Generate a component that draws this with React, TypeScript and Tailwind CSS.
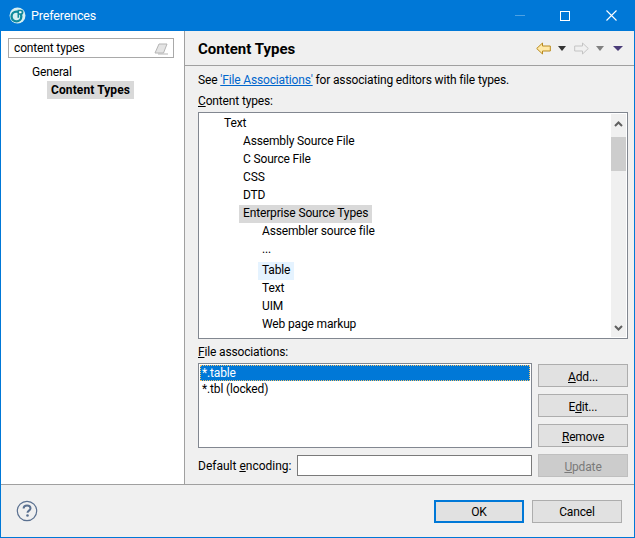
import React from "react";

const Key = ({ children }: { children: React.ReactNode }) => <span className="underline">{children}</span>;

const Row = ({ indent, children, className = "", mt = "" }: { indent: string; children: React.ReactNode; className?: string; mt?: string }) => (
  <div className={`flex h-[18px] items-center ${indent} ${mt}`}>
    <span className={`flex h-[18px] items-center whitespace-nowrap px-[4px] pb-[2px] ${className}`}>{children}</span>
  </div>
);

const Btn = ({ children, disabled = false, className = "" }: { children: React.ReactNode; disabled?: boolean; className?: string }) => (
  <button
    className={`flex h-[23px] w-[90px] items-center justify-center border pt-[2px] ${
      disabled ? "border-[#bfbfbf] bg-[#cccccc] text-[#7a7a7a]" : "border-[#adadad] bg-[#e1e1e1]"
    } ${className}`}
  >
    <span>{children}</span>
  </button>
);

const Arrow = ({ flip = false, fill, stroke }: { flip?: boolean; fill: string; stroke: string }) => (
  <svg width="15" height="13" viewBox="0 0 15 13" className={flip ? "-scale-x-100" : ""}>
    <path d="M.7 6.5 6.5 1v3h7.8v5H6.5v3z" fill={fill} stroke={stroke} strokeWidth="1" />
  </svg>
);

const Tri = ({ color, wide = false }: { color: string; wide?: boolean }) => (
  <svg width={wide ? 10 : 8} height="5" viewBox="0 0 9 5" preserveAspectRatio="none">
    <path d="M0 0h9L4.5 5z" fill={color} />
  </svg>
);

export default function App() {
  return (
    <div
      className="flex h-[538px] w-[635px] flex-col border border-t-0 border-[#0078d7] bg-[#f0f0f0] text-[12px] tracking-[-0.15px] text-[#000]"
      style={{ fontFamily: "Roboto, Arial, sans-serif" }}
    >
      {/* title bar */}
      <div className="flex h-[31px] shrink-0 items-center bg-[#0078d7] text-white">
        <svg width="17" height="17" viewBox="0 0 16 16" className="ml-[8px]">
          <circle cx="8" cy="8" r="7.5" fill="#d6eff2" />
          <circle cx="7" cy="9" r="4.6" fill="none" stroke="#0f8a9c" strokeWidth="2.2" />
          <path d="M8 2.5h3.2a2.4 2.4 0 0 1 0 4.8H9.5V10H8z" fill="#0f8a9c" />
          <path d="M9.5 4v1.8h1.5a.9.9 0 0 0 0-1.8z" fill="#fff" />
        </svg>
        <span className="ml-[5px] pt-px text-[12.5px]">Preferences</span>
        <div className="ml-auto flex items-center">
          <div className="mr-[35px] h-px w-[10px] bg-[#4da1e3]" />
          <div className="mr-[36px] h-[10px] w-[10px] border border-white" />
          <svg width="11" height="11" viewBox="0 0 11 11" className="mr-[17px]">
            <path d="M.5.5l10 10M10.5.5l-10 10" stroke="#fff" strokeWidth="1.1" />
          </svg>
        </div>
      </div>

      <div className="flex h-[453px] shrink-0">
        {/* left tree */}
        <div className="flex w-[184px] shrink-0 flex-col border-r border-[#a0a0a0] bg-white">
          <div className="ml-[7px] mt-[7px] flex h-[20px] w-[166px] items-center border border-[#a9a9a9] pl-[5px] pr-[5px]">
            <span>content types</span>
            <svg width="14" height="14" viewBox="0 0 14 14" className="ml-auto">
              <path d="M1 12 5 3h8l-3.500 9z" fill="#e4e4e4" stroke="#b5b5b5" />
              <path d="M4 13h10" stroke="#b5b5b5" />
            </svg>
          </div>
          <div className="ml-[31px] mt-[5px] h-[18px] leading-[18px]">General</div>
          <div className="ml-[46px] flex h-[18px] w-[87px] items-center whitespace-nowrap bg-[#d9d9d9] pl-[4px] font-bold tracking-[0.1px]">Content Types</div>
        </div>

        {/* right page */}
        <div className="flex min-w-0 flex-1 flex-col">
          <div className="flex h-[35px] shrink-0 items-center border-b border-[#a0a0a0] pl-[13px] pr-[11px]">
            <span className="pt-[2px] text-[15px] font-bold tracking-normal">Content Types</span>
            <div className="ml-auto flex items-center">
              <Arrow fill="#ffe9a8" stroke="#b98a1e" />
              <div className="ml-[7px]"><Tri color="#333333" /></div>
              <div className="ml-[8px]"><Arrow flip fill="#f0f0f0" stroke="#c4c4c4" /></div>
              <div className="ml-[7px]"><Tri color="#808080" /></div>
              <div className="ml-[9px]"><Tri color="#4a3c78" wide /></div>
            </div>
          </div>

          <div className="flex flex-1 flex-col pl-[13px] pr-[6px]">
            <div className="mt-[6px] h-[16px] leading-[16px]">
              See <a className="text-[#0066cc] underline">'File Associations'</a> for associating editors with file types.
            </div>
            <div className="mt-[5px] h-[16px] leading-[16px]"><Key>C</Key>ontent types:</div>

            <div className="mt-[3px] flex h-[227px] shrink-0 border border-[#828790] bg-white py-[1px] pl-px pr-px">
              <div className="min-w-0 flex-1 pt-px">
                <Row indent="pl-[20px]">Text</Row>
                <Row indent="pl-[39px]">Assembly Source File</Row>
                <Row indent="pl-[39px]">C Source File</Row>
                <Row indent="pl-[39px]">CSS</Row>
                <Row indent="pl-[39px]">DTD</Row>
                <Row indent="pl-[39px]" className="bg-[#d9d9d9]">Enterprise Source Types</Row>
                <Row indent="pl-[58px]">Assembler source file</Row>
                <Row indent="pl-[58px]">...</Row>
                <Row indent="pl-[58px]" mt="mt-[3px]" className="bg-[#e5f3ff]">Table</Row>
                <Row indent="pl-[58px]">Text</Row>
                <Row indent="pl-[58px]">UIM</Row>
                <Row indent="pl-[58px]">Web page markup</Row>
              </div>
              <div className="flex w-[15px] shrink-0 flex-col items-center bg-[#f0f0f0]">
                <svg width="9" height="6" viewBox="0 0 9 6" className="mt-[7px]">
                  <path d="M1 5l3.500-3.500L8 5" fill="none" stroke="#606060" strokeWidth="2" />
                </svg>
                <div className="mt-[10px] h-[34px] w-[15px] bg-[#cdcdcd]" />
                <svg width="9" height="6" viewBox="0 0 9 6" className="mb-[6px] mt-auto">
                  <path d="M1 1l3.500 3.500L8 1" fill="none" stroke="#606060" strokeWidth="2" />
                </svg>
              </div>
            </div>

            <div className="mt-[5px] h-[16px] leading-[16px]"><Key>F</Key>ile associations:</div>

            <div className="mt-[3px] flex">
              <div className="h-[85px] w-[334px] border border-[#828790] bg-white p-px">
                <div className="flex h-[16px] items-center border border-dotted border-[#f5c36b] bg-[#0078d7] pl-[1px] text-white">*.table</div>
                <div className="flex h-[16px] items-center pl-[2px]">*.tbl (locked)</div>
              </div>
              <div className="ml-[6px] mt-px flex flex-col gap-[7px]">
                <Btn><Key>A</Key>dd...</Btn>
                <Btn>E<Key>d</Key>it...</Btn>
                <Btn><Key>R</Key>emove</Btn>
              </div>
            </div>

            <div className="mt-[6px] flex h-[23px] items-center">
              <span className="w-[99px] shrink-0 whitespace-nowrap pt-px tracking-normal">Default <Key>e</Key>ncoding:</span>
              <div className="h-[21px] w-[235px] border border-[#7a7a7a] bg-white" />
              <Btn disabled className="ml-[6px]"><Key>U</Key>pdate</Btn>
            </div>
          </div>
        </div>
      </div>

      {/* footer */}
      <div className="flex flex-1 items-center border-t border-[#a0a0a0] bg-[#f0f0f0]">
        <svg width="22" height="22" viewBox="0 0 22 22" className="ml-[15px]">
          <circle cx="11" cy="11" r="9.700" fill="none" stroke="#5a7090" strokeWidth="1.200" />
          <path d="M7.600 8.400c0-2 1.500-3 3.500-3s3.400 1 3.400 2.800c0 2.400-3 2.400-3 4.600" fill="none" stroke="#5a7090" strokeWidth="2" />
          <circle cx="11.500" cy="15.500" r="1.300" fill="#5a7090" />
        </svg>
        <div className="ml-auto flex gap-[8px] pr-[12px]">
          <button className="flex h-[23px] w-[90px] items-center justify-center border-2 border-[#0078d7] bg-[#e1e1e1] pt-px">OK</button>
          <Btn>Cancel</Btn>
        </div>
      </div>
    </div>
  );
}
